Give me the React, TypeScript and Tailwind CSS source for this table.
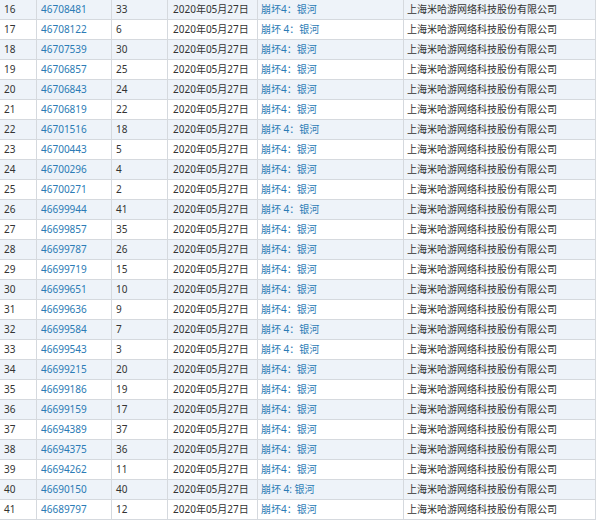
import React from "react";

const rows: [number, string, number, string][] = [
  [16, "46708481", 33, "崩坏4：银河"],
  [17, "46708122", 6, "崩坏 4：银河"],
  [18, "46707539", 30, "崩坏4：银河"],
  [19, "46706857", 25, "崩坏4：银河"],
  [20, "46706843", 24, "崩坏4：银河"],
  [21, "46706819", 22, "崩坏4：银河"],
  [22, "46701516", 18, "崩坏 4：银河"],
  [23, "46700443", 5, "崩坏4：银河"],
  [24, "46700296", 4, "崩坏4：银河"],
  [25, "46700271", 2, "崩坏4：银河"],
  [26, "46699944", 41, "崩坏 4：银河"],
  [27, "46699857", 35, "崩坏4：银河"],
  [28, "46699787", 26, "崩坏4：银河"],
  [29, "46699719", 15, "崩坏4：银河"],
  [30, "46699651", 10, "崩坏4：银河"],
  [31, "46699636", 9, "崩坏4：银河"],
  [32, "46699584", 7, "崩坏 4：银河"],
  [33, "46699543", 3, "崩坏 4：银河"],
  [34, "46699215", 20, "崩坏4：银河"],
  [35, "46699186", 19, "崩坏4：银河"],
  [36, "46699159", 17, "崩坏4：银河"],
  [37, "46694389", 37, "崩坏4：银河"],
  [38, "46694375", 36, "崩坏4：银河"],
  [39, "46694262", 11, "崩坏4：银河"],
  [40, "46690150", 40, "崩坏 4: 银河"],
  [41, "46689797", 12, "崩坏4：银河"],
];

export default function App() {
  return (
    <div
      className="w-[596px] h-[521px] overflow-hidden bg-white text-[10px] text-[#333] whitespace-nowrap"
      style={{ fontFamily: '"Noto Sans", "Noto Sans CJK SC", sans-serif' }}
    >
      {rows.map(([n, id, c, g], i) => (
        <div
          key={n}
          className={`grid grid-cols-[37px_75px_56px_90px_146px_1fr] h-[20px] border-b border-[#d5d9de] ${
            i % 2 === 0 ? "bg-[#eef3f9]" : "bg-white"
          }`}
        >
          <div className="pl-[4px] border-r border-[#d5d9de] leading-[19px]">{n}</div>
          <div className="pl-[4px] border-r border-[#d5d9de] leading-[19px] text-[#2b7bb5]">{id}</div>
          <div className="pl-[4px] border-r border-[#d5d9de] leading-[19px]">{c}</div>
          <div className="pl-[5px] border-r border-[#d5d9de] leading-[19px]">2020年05月27日</div>
          <div className="pl-[3px] border-r border-[#d5d9de] leading-[19px] text-[#2b7bb5]">{g}</div>
          <div className="pl-[3px] border-r border-[#d5d9de] leading-[19px]">上海米哈游网络科技股份有限公司</div>
        </div>
      ))}
    </div>
  );
}
